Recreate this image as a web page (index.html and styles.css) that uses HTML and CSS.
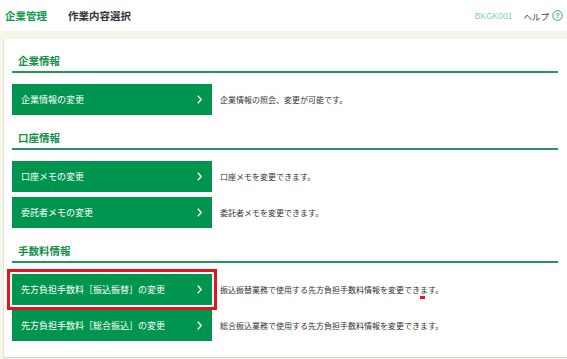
FILE: index.html
```html
<!DOCTYPE html>
<html lang="ja">
<head>
<meta charset="utf-8">
<title>作業内容選択</title>
<link rel="stylesheet" href="styles.css">
</head>
<body>
<header class="topbar">
  <div class="crumbs">
    <span class="app">企業管理</span>
    <span class="page">作業内容選択</span>
  </div>
  <div class="tools">
    <span class="code">BKGK001</span>
    <span class="help">ヘルプ</span>
    <svg class="help-icon" width="11" height="11" viewBox="0 0 11 11" aria-hidden="true">
      <circle cx="5.5" cy="5.5" r="4.8" fill="none" stroke="#5cc68a" stroke-width="1.2"/>
      <text x="5.5" y="8.4" text-anchor="middle" font-size="8" font-weight="bold" fill="#3fb873" font-family="Liberation Sans, sans-serif">?</text>
    </svg>
  </div>
</header>
<main class="card">
  <section class="section">
    <h2 class="section-title">企業情報</h2>
    <ul class="rows">
      <li class="row">
        <a class="btn" href="#">企業情報の変更<svg class="chev" width="5" height="9" viewBox="0 0 5 9"><polyline points="0.8,0.8 4.2,4.5 0.8,8.2" fill="none" stroke="#fff" stroke-width="1.4"/></svg></a>
        <p class="desc">企業情報の照会、変更が可能です。</p>
      </li>
    </ul>
  </section>
  <section class="section">
    <h2 class="section-title">口座情報</h2>
    <ul class="rows">
      <li class="row">
        <a class="btn" href="#">口座メモの変更<svg class="chev" width="5" height="9" viewBox="0 0 5 9"><polyline points="0.8,0.8 4.2,4.5 0.8,8.2" fill="none" stroke="#fff" stroke-width="1.4"/></svg></a>
        <p class="desc">口座メモを変更できます。</p>
      </li>
      <li class="row">
        <a class="btn" href="#">委託者メモの変更<svg class="chev" width="5" height="9" viewBox="0 0 5 9"><polyline points="0.8,0.8 4.2,4.5 0.8,8.2" fill="none" stroke="#fff" stroke-width="1.4"/></svg></a>
        <p class="desc">委託者メモを変更できます。</p>
      </li>
    </ul>
  </section>
  <section class="section">
    <h2 class="section-title">手数料情報</h2>
    <ul class="rows">
      <li class="row">
        <a class="btn is-marked" href="#">先方負担手数料［振込振替］の変更<svg class="chev" width="5" height="9" viewBox="0 0 5 9"><polyline points="0.8,0.8 4.2,4.5 0.8,8.2" fill="none" stroke="#fff" stroke-width="1.4"/></svg></a>
        <p class="desc">振込振替業務で使用する先方負担手数料情報を変更できます。</p>
        <span class="mark"></span>
      </li>
      <li class="row">
        <a class="btn" href="#">先方負担手数料［総合振込］の変更<svg class="chev" width="5" height="9" viewBox="0 0 5 9"><polyline points="0.8,0.8 4.2,4.5 0.8,8.2" fill="none" stroke="#fff" stroke-width="1.4"/></svg></a>
        <p class="desc">総合振込業務で使用する先方負担手数料情報を変更できます。</p>
      </li>
    </ul>
  </section>
</main>
</body>
</html>
```
FILE: styles.css
```css
html, body {
  margin: 0;
  padding: 0;
}
body {
  background: #f4f6ea;
  font-family: "Noto Sans CJK JP", "Noto Sans", sans-serif;
  color: #333;
  overflow: hidden;
}
.topbar {
  height: 31px;
  background: #fff;
  display: flex;
  justify-content: space-between;
  align-items: center;
  padding: 0 4px 0 5px;
}
.crumbs {
  display: flex;
  align-items: center;
  gap: 21px;
  font-weight: bold;
  font-size: 10.5px;
}
.app {
  color: #0f9a50;
}
.page {
  color: #333;
}
.tools {
  display: flex;
  align-items: center;
}
.code {
  font-family: "Liberation Sans", Arial, sans-serif;
  font-size: 8.5px;
  color: #8dd0a7;
  margin-right: 11px;
}
.help {
  font-size: 8.5px;
  color: #333;
  margin-right: 3px;
}
.help-icon {
  display: block;
}
.card {
  margin: 8px 0 0 3px;
  background: #fff;
  border-left: 1px solid #e3e5d8;
  border-bottom: 1px solid #d3d3cb;
  padding: 0 9px 16px 8px;
}
.section + .section {
  margin-top: 1px;
}
.section-title {
  margin: 0;
  padding: 13px 6px 1px;
  font-size: 10.5px;
  line-height: 18px;
  font-weight: bold;
  color: #12904a;
  border-bottom: 2px solid #1f9a56;
}
.rows {
  list-style: none;
  margin: 11px 0 0;
  padding: 0;
  display: flex;
  flex-direction: column;
  gap: 5px;
}
.row {
  display: flex;
  align-items: center;
  gap: 8px;
  position: relative;
}
.btn {
  flex: none;
  box-sizing: border-box;
  width: 200px;
  height: 31px;
  background: #00954e;
  color: #fff;
  display: flex;
  align-items: center;
  justify-content: space-between;
  padding: 0 10px 0 9px;
  font-size: 9px;
  text-decoration: none;
}
.btn.is-marked {
  outline: 3px solid #e8141c;
  outline-offset: 2px;
}
.chev {
  display: block;
}
.desc {
  margin: 0;
  font-size: 8px;
  color: #333;
}
.mark {
  position: absolute;
  left: 408px;
  top: 22px;
  width: 5px;
  height: 3px;
  background: #e8141c;
}
```
